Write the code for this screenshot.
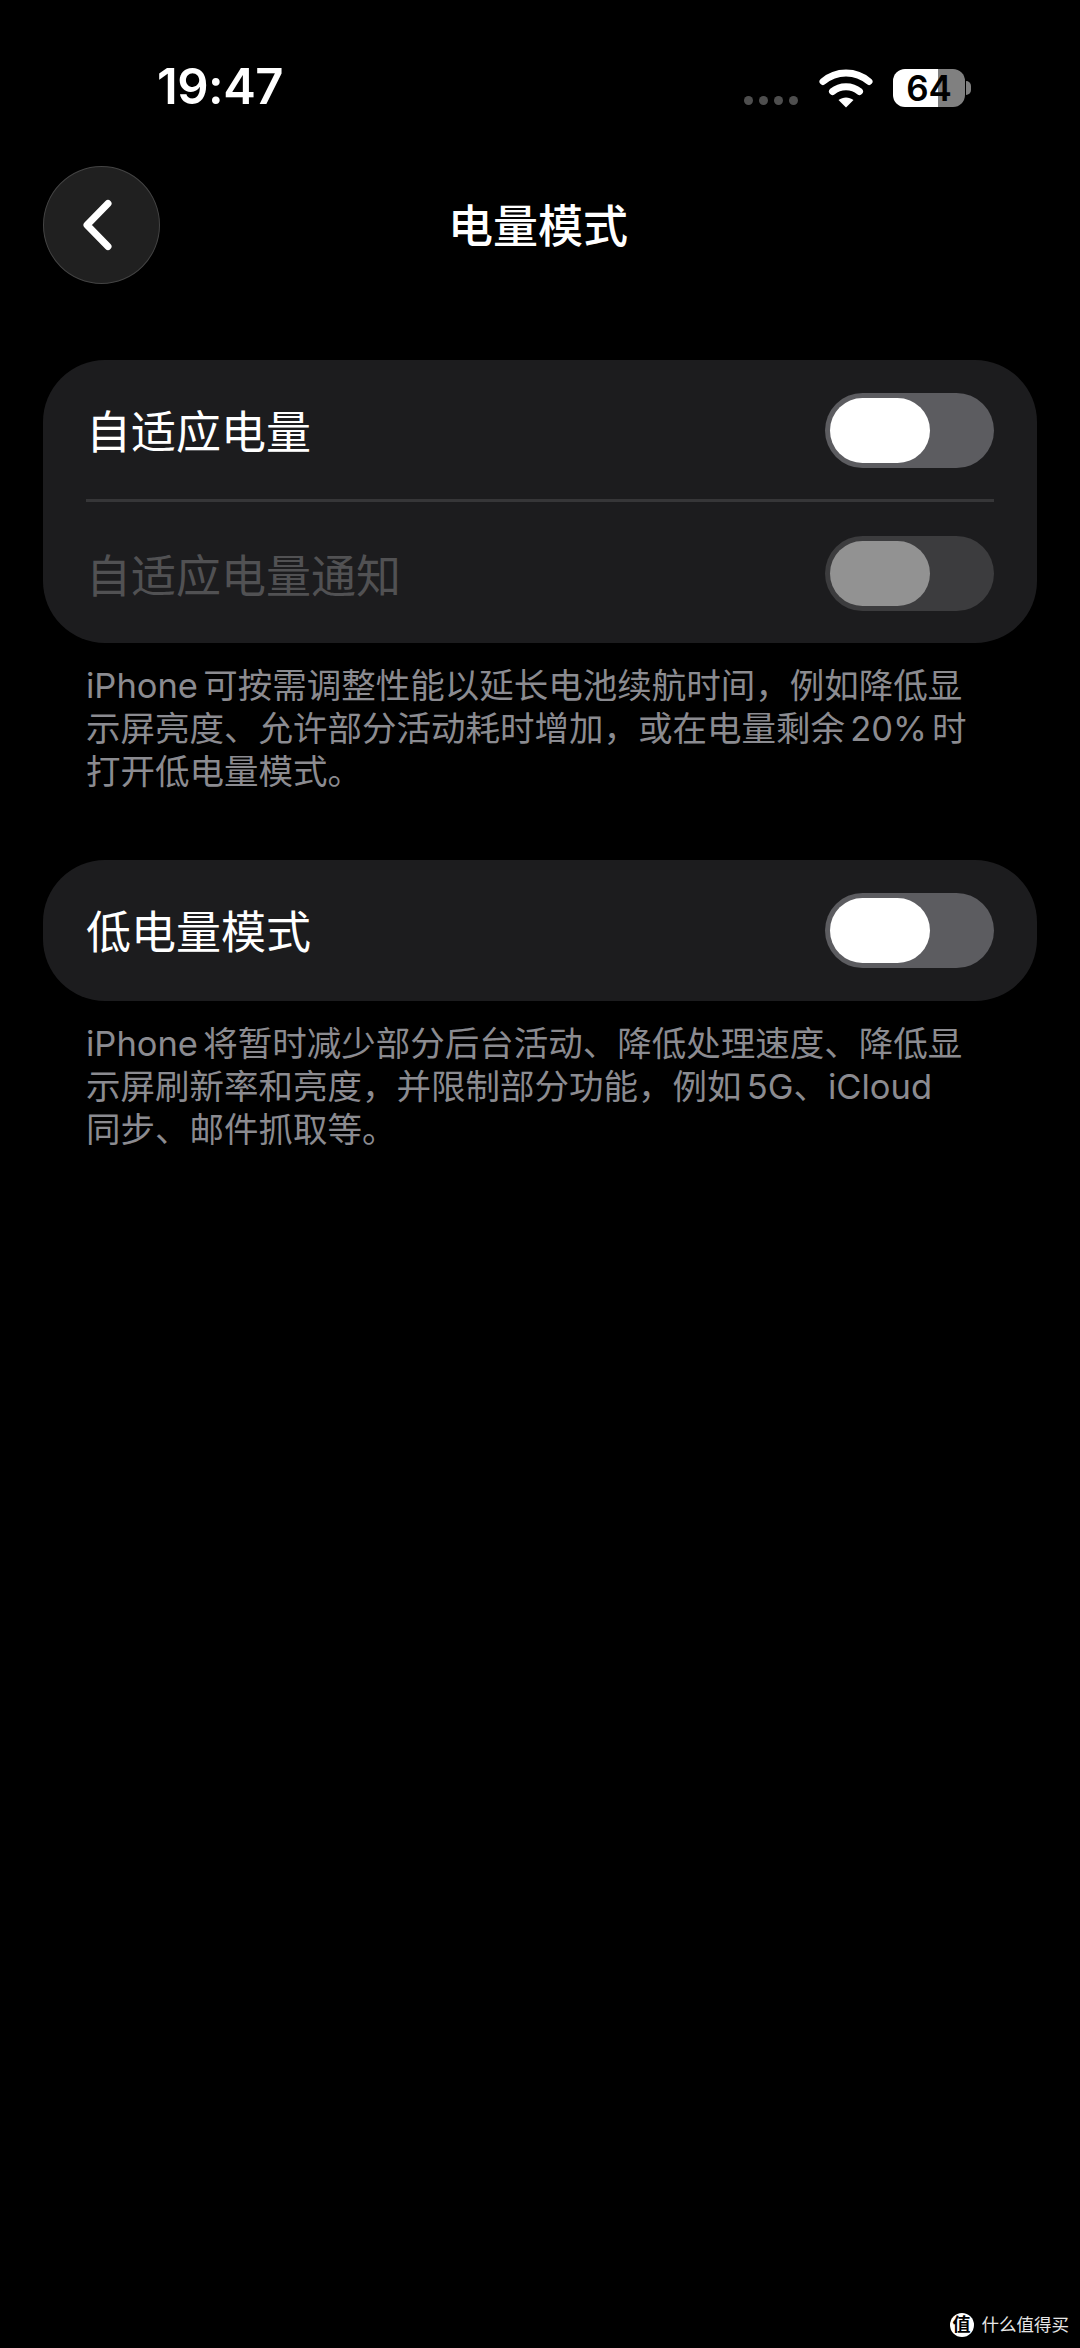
<div class="screen">
	<div class="status">
		<span class="time">19:47</span>
		<div class="status-right">
			<div class="dots"><i></i><i></i><i></i><i></i></div>
			<svg class="wifi" width="54" height="40" viewBox="0 0 54 40" fill="none" stroke="#fff" stroke-width="7" stroke-linecap="round">
				<path d="M4 13.5C17 2 37 2 50 13.5" />
				<path d="M13.5 23.5C21 17 33 17 40.5 23.5" />
				<path d="M27 39.5L19.5 32C24 28.5 30 28.5 34.5 32Z" fill="#fff" stroke="none" />
			</svg>
			<div class="battery">
				<div class="batt-body"><span>64</span></div>
				<div class="batt-cap"></div>
			</div>
		</div>
	</div>

	<div class="nav">
		<button class="back" aria-label="返回">
			<svg width="36" height="58" viewBox="0 0 36 58" fill="none" stroke="#fff" stroke-width="7" stroke-linecap="round" stroke-linejoin="round">
				<path d="M26 7.5L5 29L26 50.5" />
			</svg>
		</button>
		<h1>电量模式</h1>
	</div>

	<div class="card first">
		<div class="row top">
			<span class="label">自适应电量</span>
			<div class="toggle"><div class="thumb"></div></div>
		</div>
		<div class="sep"></div>
		<div class="row dim">
			<span class="label">自适应电量通知</span>
			<div class="toggle"><div class="thumb"></div></div>
		</div>
	</div>
	<p class="note">iPhone 可按需调整性能以延长电池续航时间，例如降低显<br />示屏亮度、允许部分活动耗时增加，或在电量剩余 20% 时<br />打开低电量模式。</p>

	<div class="card second">
		<div class="row">
			<span class="label">低电量模式</span>
			<div class="toggle"><div class="thumb"></div></div>
		</div>
	</div>
	<p class="note">iPhone 将暂时减少部分后台活动、降低处理速度、降低显<br />示屏刷新率和亮度，并限制部分功能，例如 5G、iCloud<br />同步、邮件抓取等。</p>

	<div class="watermark">
		<span class="wm-logo">值</span>
		<span class="wm-text">什么值得买</span>
	</div>
</div>

<style>
	:global(body) {
		margin: 0;
		background: #000;
	}

	.screen {
		position: relative;
		width: 1080px;
		height: 2348px;
		box-sizing: border-box;
		padding: 0 43px;
		background: #000;
		color: #fff;
		font-family: "Inter", "Noto Sans CJK SC", sans-serif;
		overflow: hidden;
	}

	.status {
		display: flex;
		justify-content: space-between;
		align-items: flex-start;
		height: 166px;
		padding: 0 66px 0 114px;
		box-sizing: border-box;
	}

	.time {
		margin-top: 59px;
		font-size: 49px;
		line-height: 56px;
		font-weight: 600;
		letter-spacing: -0.5px;
	}

	.status-right {
		display: flex;
		align-items: flex-start;
		margin-top: 66px;
	}

	.dots {
		display: flex;
		gap: 6px;
		margin: 30px 21px 0 0;
	}

	.dots i {
		width: 9px;
		height: 9px;
		border-radius: 50%;
		background: #4e4e4e;
	}

	.wifi {
		margin: 2px 20px 0 0;
	}

	.battery {
		display: flex;
		align-items: center;
		height: 39px;
		margin-top: 2px;
	}

	.batt-body {
		width: 72px;
		height: 38px;
		border-radius: 12px;
		background: linear-gradient(90deg, #fff 0 62%, #808080 62% 100%);
		display: flex;
		align-items: center;
		justify-content: center;
		color: #000;
		font-size: 35px;
		font-weight: 600;
		line-height: 38px;
	}

	.batt-cap {
		width: 5px;
		height: 14px;
		margin-left: 1px;
		border-radius: 0 7px 7px 0;
		background: #808080;
	}

	.nav {
		position: relative;
		height: 194px;
		box-sizing: border-box;
		display: flex;
		justify-content: center;
	}

	.back {
		position: absolute;
		left: 0;
		top: 0;
		width: 117px;
		height: 118px;
		padding: 0 3px 0 0;
		border: 1.5px solid #444;
		border-radius: 50%;
		background: #202020;
		display: flex;
		align-items: center;
		justify-content: center;
	}

	h1 {
		margin: 29px 0 0;
		font-size: 45px;
		line-height: 64px;
		font-weight: 500;
		transform: translateX(-2px);
	}

	.card {
		background: #1c1c1e;
		border-radius: 62px;
		padding: 0 43px;
	}

	.card.first {
		height: 283px;
	}

	.card.second {
		height: 141px;
	}

	.row {
		display: flex;
		align-items: center;
		justify-content: space-between;
		height: 140px;
		box-sizing: border-box;
	}

	.row.top {
		height: 139px;
		padding-top: 2px;
	}

	.row.dim {
		height: 141px;
		padding-top: 2px;
	}

	.label {
		margin-top: 5px;
		font-size: 45px;
		line-height: 60px;
		font-weight: 400;
		color: #fff;
	}

	.dim .label {
		margin-top: 7px;
		color: #515153;
	}

	.toggle {
		width: 169px;
		height: 75px;
		box-sizing: border-box;
		padding: 5px;
		border-radius: 38px;
		background: #5c5c60;
	}

	.thumb {
		width: 100px;
		height: 65px;
		border-radius: 33px;
		background: #fff;
	}

	.sep {
		height: 3px;
		background: #363638;
	}

	.dim .toggle {
		background: #3c3c3e;
	}

	.dim .thumb {
		background: #929292;
	}

	.note {
		margin: 0;
		padding: 21px 0 0 43px;
		height: 217px;
		box-sizing: border-box;
		font-size: 34.5px;
		line-height: 43px;
		word-spacing: -4.5px;
		color: #8b8b90;
		white-space: nowrap;
	}

	.watermark {
		position: absolute;
		right: 11px;
		bottom: 11px;
		display: flex;
		align-items: center;
		gap: 8px;
	}

	.wm-logo {
		width: 24px;
		height: 24px;
		border-radius: 50%;
		background: #fff;
		color: #000;
		font-size: 18px;
		font-weight: 700;
		line-height: 24px;
		text-align: center;
	}

	.wm-text {
		font-size: 17.5px;
		line-height: 24px;
		color: #e6e6e6;
	}
</style>
